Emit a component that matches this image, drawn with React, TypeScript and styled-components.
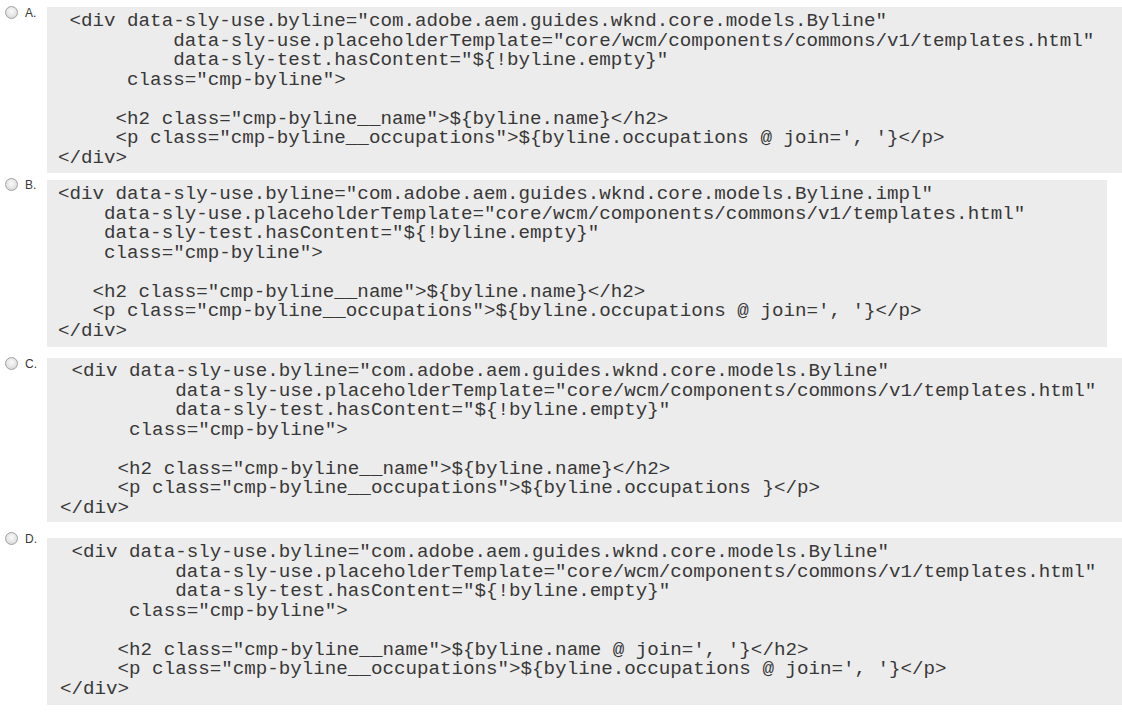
import React from "react";
import styled, { createGlobalStyle } from "styled-components";

const GlobalStyle = createGlobalStyle`
  html, body {
    margin: 0;
    padding: 0;
    background: #ffffff;
  }
  body {
    font-family: "Liberation Sans", Arial, sans-serif;
  }
`;

const Page = styled.div`
  display: flex;
  flex-direction: column;
  width: 1122px;
`;

const OptionRow = styled.div<{ $top: number; $right: number }>`
  display: flex;
  align-items: flex-start;
  margin-top: ${(p) => p.$top}px;
  margin-right: ${(p) => p.$right}px;
`;

const Choice = styled.label`
  display: flex;
  align-items: center;
  gap: 7px;
  width: 42px;
  padding-left: 5px;
  flex-shrink: 0;
  font-size: 12px;
  line-height: 12px;
  color: #3a3a3a;
`;

const Radio = styled.span`
  display: inline-block;
  width: 11px;
  height: 11px;
  border-radius: 50%;
  border: 1px solid #a2a2a2;
  background: radial-gradient(circle at 50% 40%, #fbfbfb 0%, #e4e4e4 55%, #cfcfcf 100%);
  box-sizing: content-box;
`;

const CodeBox = styled.pre<{ $offset: number; $padTop: number; $padBottom: number; $indent: number }>`
  flex: 1;
  margin: ${(p) => p.$offset}px 0 0 0;
  padding: ${(p) => p.$padTop}px 0 ${(p) => p.$padBottom}px ${(p) => p.$indent}px;
  background: #ececec;
  font-family: "Liberation Mono", "Courier New", monospace;
  font-size: 19.2px;
  line-height: 19.5px;
  color: #383838;
  white-space: pre;
  overflow: hidden;
`;

type Option = {
  letter: string;
  top: number;
  right: number;
  offset: number;
  padTop: number;
  padBottom: number;
  indent: number;
  code: string;
};

const options: Option[] = [
  {
    letter: "A.",
    top: 6,
    right: 0,
    offset: 1,
    padTop: 5,
    padBottom: 5,
    indent: 11,
    code: ` <div data-sly-use.byline="com.adobe.aem.guides.wknd.core.models.Byline"
          data-sly-use.placeholderTemplate="core/wcm/components/commons/v1/templates.html"
          data-sly-test.hasContent="\${!byline.empty}"
      class="cmp-byline">

     <h2 class="cmp-byline__name">\${byline.name}</h2>
     <p class="cmp-byline__occupations">\${byline.occupations @ join=', '}</p>
</div>`,
  },
  {
    letter: "B.",
    top: 5,
    right: 15,
    offset: 2,
    padTop: 5,
    padBottom: 6,
    indent: 11,
    code: `<div data-sly-use.byline="com.adobe.aem.guides.wknd.core.models.Byline.impl"
    data-sly-use.placeholderTemplate="core/wcm/components/commons/v1/templates.html"
    data-sly-test.hasContent="\${!byline.empty}"
    class="cmp-byline">

   <h2 class="cmp-byline__name">\${byline.name}</h2>
   <p class="cmp-byline__occupations">\${byline.occupations @ join=', '}</p>
</div>`,
  },
  {
    letter: "C.",
    top: 10,
    right: 0,
    offset: 1,
    padTop: 4,
    padBottom: 4,
    indent: 13,
    code: ` <div data-sly-use.byline="com.adobe.aem.guides.wknd.core.models.Byline"
          data-sly-use.placeholderTemplate="core/wcm/components/commons/v1/templates.html"
          data-sly-test.hasContent="\${!byline.empty}"
      class="cmp-byline">

     <h2 class="cmp-byline__name">\${byline.name}</h2>
     <p class="cmp-byline__occupations">\${byline.occupations }</p>
</div>`,
  },
  {
    letter: "D.",
    top: 10,
    right: 0,
    offset: 6,
    padTop: 5,
    padBottom: 6,
    indent: 13,
    code: ` <div data-sly-use.byline="com.adobe.aem.guides.wknd.core.models.Byline"
          data-sly-use.placeholderTemplate="core/wcm/components/commons/v1/templates.html"
          data-sly-test.hasContent="\${!byline.empty}"
      class="cmp-byline">

     <h2 class="cmp-byline__name">\${byline.name @ join=', '}</h2>
     <p class="cmp-byline__occupations">\${byline.occupations @ join=', '}</p>
</div>`,
  },
];

export default function App() {
  return (
    <>
      <GlobalStyle />
      <Page>
        {options.map((o) => (
          <OptionRow key={o.letter} $top={o.top} $right={o.right}>
            <Choice>
              <Radio />
              {o.letter}
            </Choice>
            <CodeBox $offset={o.offset} $padTop={o.padTop} $padBottom={o.padBottom} $indent={o.indent}>
              {o.code}
            </CodeBox>
          </OptionRow>
        ))}
      </Page>
    </>
  );
}
